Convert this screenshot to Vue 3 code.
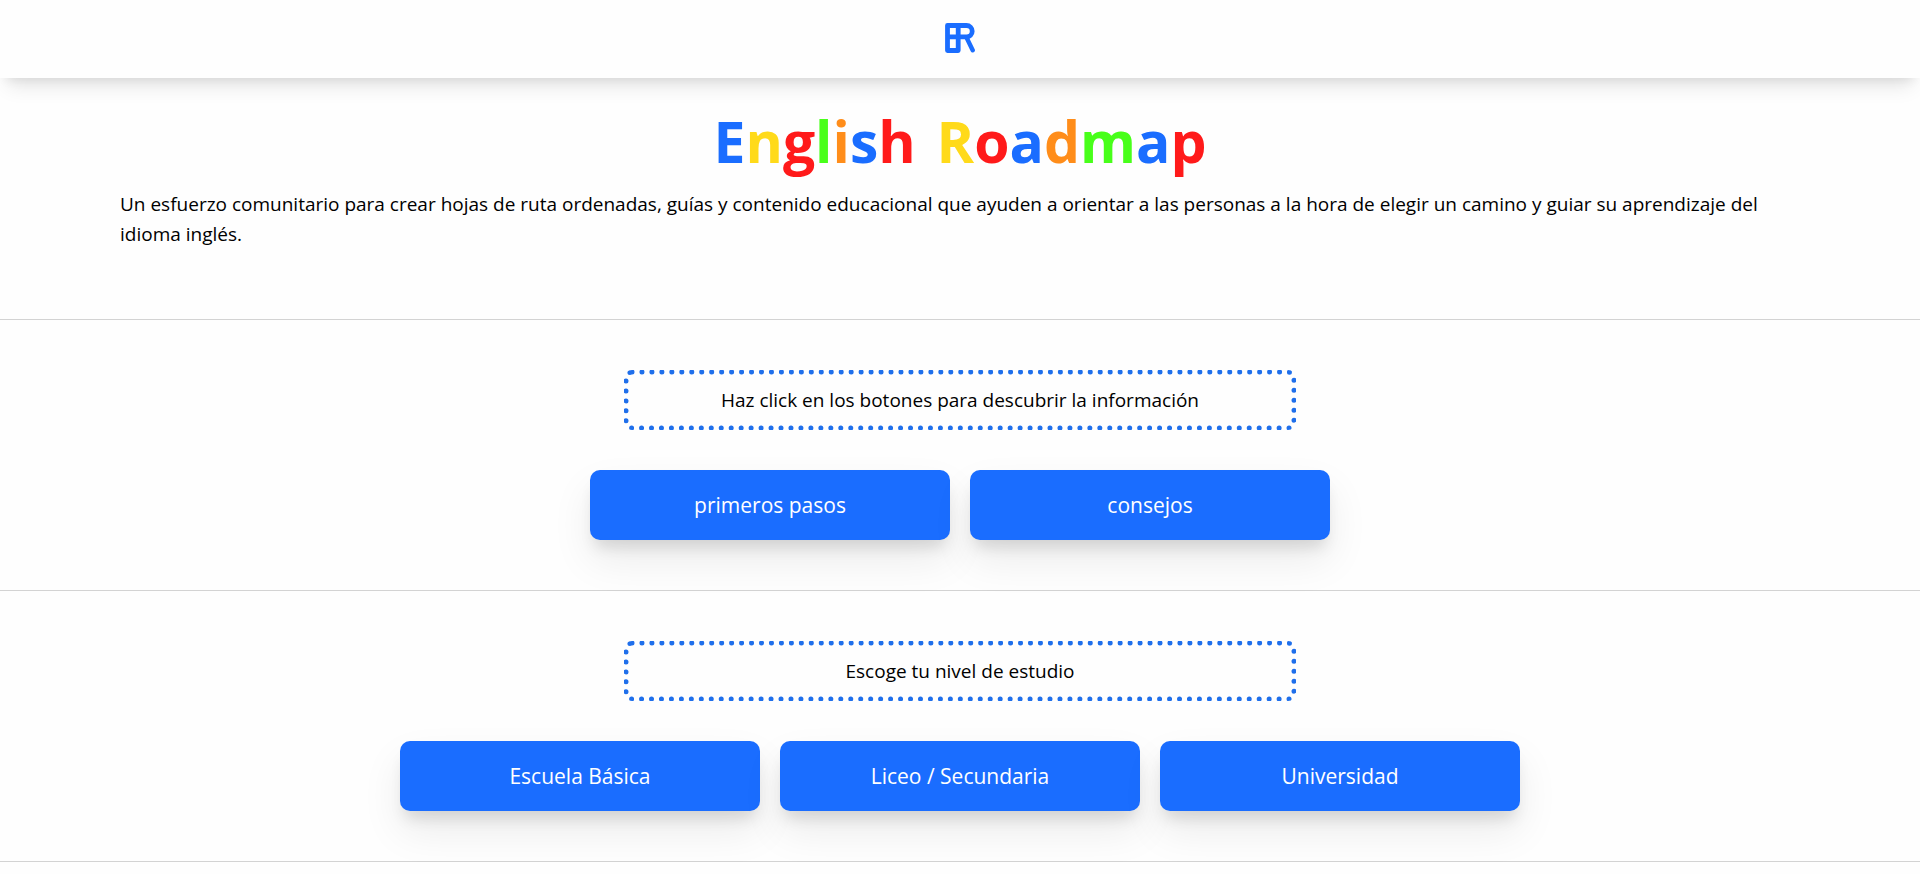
<script setup>
const title = [
  { id: 'english', letters: [['E', 'blue'], ['n', 'yellow'], ['g', 'red'], ['l', 'green'], ['i', 'orange'], ['s', 'blue'], ['h', 'red']] },
  { id: 'roadmap', letters: [['R', 'yellow'], ['o', 'red'], ['a', 'blue'], ['d', 'orange'], ['m', 'green'], ['a', 'blue'], ['p', 'red']] },
]

const sections = [
  { hint: 'Haz click en los botones para descubrir la información', actions: ['primeros pasos', 'consejos'] },
  { hint: 'Escoge tu nivel de estudio', actions: ['Escuela Básica', 'Liceo / Secundaria', 'Universidad'] },
]
</script>

<template>
  <header class="topbar">
    <a class="brand" href="#" aria-label="English Roadmap">
      <svg class="logo" viewBox="0 0 30 30" fill="none" stroke="currentColor" stroke-width="4.8" stroke-linecap="round" stroke-linejoin="round" aria-hidden="true">
        <path d="M2.5 2.5H21.5a5.7 5.7 0 0 1 0 11.4H2.5M2.5 2.5V27.5H13.2V2.5" />
        <path d="M21.5 14.5L27.7 27.3" stroke-width="4.4" />
      </svg>
    </a>
  </header>
  <main>
    <section class="intro">
      <h1 class="title">
        <template v-for="(word, w) in title" :key="word.id">{{ w ? ' ' : '' }}<span class="word"><span v-for="(l, i) in word.letters" :key="i" :class="l[1]">{{ l[0] }}</span></span></template>
      </h1>
      <p class="lead">Un esfuerzo comunitario para crear hojas de ruta ordenadas, guías y contenido educacional que ayuden a orientar a las personas a la hora de elegir un camino y guiar su aprendizaje del idioma inglés.</p>
    </section>
    <section v-for="s in sections" :key="s.hint" class="panel">
      <p class="hint">{{ s.hint }}</p>
      <div class="actions">
        <button v-for="a in s.actions" :key="a" type="button" class="action">{{ a }}</button>
      </div>
    </section>
    <section class="panel-end"></section>
  </main>
</template>

<style>
body {
  margin: 0;
  background: #fefefe;
}
</style>

<style scoped>
.topbar,
main {
  font-family: "Segoe UI", "Open Sans", "Noto Sans", sans-serif;
  font-size: 19px;
  color: #000;
}

.topbar {
  display: flex;
  justify-content: center;
  padding: 23px 0 25px;
  background: #fefefe;
  box-shadow: 0 16px 20px -8px rgba(0, 0, 0, 0.1), 0 8px 10px -6px rgba(0, 0, 0, 0.08);
}

.brand {
  display: flex;
  color: #1a6dff;
}

.logo {
  width: 30px;
  height: 30px;
}

.intro {
  padding: 27px 120px 70px;
}

.title {
  margin: 0 0 12px;
  font-size: 57px;
  line-height: 72px;
  font-weight: 700;
  text-align: center;
}

.word + .word {
  margin-left: 6px;
}

.blue { color: #1a6dff; }
.yellow { color: #ffda1a; }
.red { color: #ff1a1a; }
.green { color: #48ff1a; }
.orange { color: #ff8d1a; }

.lead {
  margin: 0;
  line-height: 30px;
}

.panel {
  display: flex;
  flex-direction: column;
  align-items: center;
  gap: 40px;
  padding: 50px 20px;
  border-top: 1px solid #d3d3d3;
}

.panel-end {
  border-top: 1px solid #d3d3d3;
}

.hint {
  box-sizing: border-box;
  width: 35vw;
  margin: 0;
  padding: 10px;
  border: 5px dotted #1f6feb;
  border-radius: 8px;
  line-height: 30px;
  text-align: center;
}

.actions {
  display: flex;
  flex-wrap: wrap;
  justify-content: center;
  gap: 20px;
}

.action {
  width: 360px;
  height: 70px;
  padding: 0 20px;
  border: 0;
  border-radius: 10px;
  background: #1a6dff;
  color: #fff;
  font-family: inherit;
  font-size: 21px;
  cursor: pointer;
  box-shadow: 0 20px 40px rgba(0, 0, 0, 0.08), 0 12px 15px -5px rgba(0, 0, 0, 0.12);
}
</style>
